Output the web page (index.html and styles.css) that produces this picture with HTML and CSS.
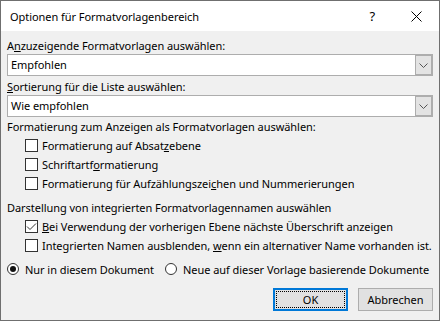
FILE: index.html
```html
<!DOCTYPE html>
<html lang="de">
<head>
    <meta charset="UTF-8">
    <title>Optionen für Formatvorlagenbereich</title>
    <link rel="stylesheet" href="styles.css">
</head>
<body>
    <div class="window">
        <div class="titlebar">
            <span class="title">Optionen für Formatvorlagenbereich</span>
            <span class="help">?</span>
            <svg class="close" width="11" height="11" viewBox="0 0 11 11">
                <path d="M0.5 0.5 L10.5 10.5 M10.5 0.5 L0.5 10.5" stroke="#000" stroke-width="1" fill="none"/>
            </svg>
        </div>

        <div class="content">
            <div class="label">A<u>n</u>zuzeigende Formatvorlagen auswählen:</div>
            <div class="combo">
                <span class="combo-text">Empfohlen</span>
                <span class="drop">
                    <svg width="9" height="5" viewBox="0 0 9 5"><path d="M0.5 0.5 L4.5 4.5 L8.5 0.5" stroke="#555" fill="none"/></svg>
                </span>
            </div>

            <div class="label label-after">
                <span><u>S</u>ortierung für die Liste auswählen:</span>
            </div>
            <div class="combo">
                <span class="combo-text">Wie empfohlen</span>
                <span class="drop">
                    <svg width="9" height="5" viewBox="0 0 9 5"><path d="M0.5 0.5 L4.5 4.5 L8.5 0.5" stroke="#555" fill="none"/></svg>
                </span>
            </div>

            <div class="label group-label">Formatierung zum Anzeigen als Formatvorlagen auswählen:</div>
            <div class="check-list">
                <div class="check-row"><span class="box"></span><span>Formatierung auf Absat<u>z</u>ebene</span></div>
                <div class="check-row"><span class="box"></span><span>Schriftartf<u>o</u>rmatierung</span></div>
                <div class="check-row"><span class="box"></span><span>Formatierung für Aufzählungszei<u>c</u>hen und Nummerierungen</span></div>
            </div>

            <div class="label section-label">Darstellung von integrierten Formatvorlagennamen auswählen</div>
            <div class="check-list">
                <div class="check-row">
                    <span class="box">
                        <svg width="11" height="11" viewBox="0 0 11 11"><path d="M1 5.5 L4 8.5 L10 2.5" stroke="#333" stroke-width="1" fill="none"/></svg>
                    </span>
                    <span><u>B</u>ei Verwendung der vorherigen Ebene nächste Überschrift anzeigen</span>
                </div>
                <div class="check-row"><span class="box"></span><span>Integrierten Namen ausblenden, <u>w</u>enn ein alternativer Name vorhanden ist.</span></div>
            </div>

            <div class="radio-row">
                <label class="radio radio-first"><span class="dot checked"></span>Nur in diesem Dokument</label>
                <label class="radio"><span class="dot"></span>Neue auf dieser Vorlage basierende Dokumente</label>
            </div>

            <div class="buttons">
                <button class="btn btn-default"><span class="focus">OK</span></button>
                <button class="btn">Abbrechen</button>
            </div>
        </div>
    </div>
</body>
</html>
```
FILE: styles.css
```css
/* Page */
body {
    margin: 0;
    font-family: "Noto Sans", "Liberation Sans", sans-serif;
    font-size: 11px;
    letter-spacing: -0.05px;
    color: #000;
}

/* Window frame */
.window {
    width: 440px;
    height: 321px;
    box-sizing: border-box;
    border: 1px solid #6f6f6f;
    background-color: #f0f0f0;
    display: flex;
    flex-direction: column;
}

/* Title bar */
.titlebar {
    height: 30px;
    background-color: #fff;
    display: flex;
    align-items: center;
    padding-left: 9px;
    flex-shrink: 0;
}
.title {
    flex: 1;
    font-size: 11px;
    padding-top: 1px;
}
.help {
    font-size: 13px;
    margin-right: 36px;
}
.close {
    margin-right: 17px;
}

/* Content */
.content {
    padding: 7px 6px 0 6px;
    display: flex;
    flex-direction: column;
}
.label {
    height: 16px;
    line-height: 16px;
    white-space: nowrap;
}
.label-after {
    margin-top: 2px;
    height: 17px;
    line-height: 17px;
}
.group-label {
    margin-top: 2px;
}
.section-label {
    margin-top: 7px;
}

/* Combo box */
.combo {
    height: 22px;
    box-sizing: border-box;
    border: 1px solid #adadad;
    background-color: #fff;
    display: flex;
    align-items: stretch;
}
.combo-text {
    flex: 1;
    padding-left: 3px;
    line-height: 20px;
}
.drop {
    width: 17px;
    box-sizing: border-box;
    border: 1px solid #adadad;
    background-color: #e3e3e3;
    display: flex;
    align-items: center;
    justify-content: center;
}

/* Checkboxes */
.check-list {
    display: flex;
    flex-direction: column;
    margin-top: 1px;
}
.check-row {
    height: 19px;
    display: flex;
    align-items: center;
    padding-left: 18px;
    white-space: nowrap;
}
.box {
    width: 13px;
    height: 13px;
    box-sizing: border-box;
    border: 1px solid #333;
    background-color: #fff;
    margin-right: 4px;
    display: flex;
    align-items: center;
    justify-content: center;
    flex-shrink: 0;
}

/* Radio buttons */
.radio-row {
    margin-top: 6px;
    height: 16px;
    display: flex;
    align-items: center;
    white-space: nowrap;
}
.radio {
    display: flex;
    align-items: center;
}
.radio-first {
    width: 158px;
}
.dot {
    width: 12px;
    height: 12px;
    box-sizing: border-box;
    border: 1px solid #333;
    border-radius: 50%;
    background-color: #fff;
    margin-right: 6px;
    display: flex;
    align-items: center;
    justify-content: center;
    flex-shrink: 0;
}
.dot.checked::after {
    content: "";
    width: 6px;
    height: 6px;
    border-radius: 50%;
    background-color: #111;
}

/* Buttons */
.buttons {
    margin-top: 11px;
    display: flex;
    justify-content: flex-end;
    gap: 10px;
}
.btn {
    width: 75px;
    height: 23px;
    box-sizing: border-box;
    border: 1px solid #adadad;
    background-color: #e1e1e1;
    font-family: inherit;
    font-size: 11px;
    color: #000;
    padding: 0;
}
.btn-default {
    border: 2px solid #0078d7;
    padding: 1px;
    display: flex;
}
.focus {
    flex: 1;
    border: 1px dotted #000;
    display: flex;
    align-items: center;
    justify-content: center;
}
```
